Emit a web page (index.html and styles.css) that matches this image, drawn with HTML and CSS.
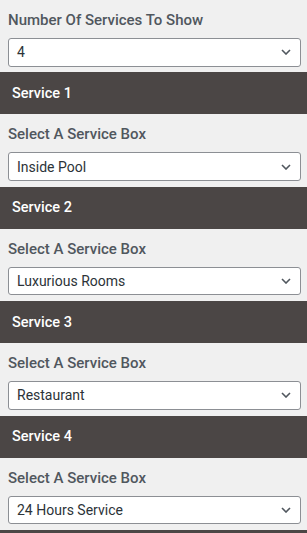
FILE: index.html
```html
<!DOCTYPE html>
<html>
<head>
<meta charset="utf-8">
<link rel="stylesheet" href="styles.css">
</head>
<body>
<div class="panel">
  <div class="field">
    <label class="label">Number Of Services To Show</label>
    <div class="select"><span>4</span><svg class="chev" viewBox="0 0 10 6" width="10" height="6"><path d="M1 1l4 4 4-4" fill="none" stroke="#50575e" stroke-width="1.6"/></svg></div>
  </div>
  <div class="bar">Service 1</div>
  <div class="field">
    <label class="label">Select A Service Box</label>
    <div class="select"><span>Inside Pool</span><svg class="chev" viewBox="0 0 10 6" width="10" height="6"><path d="M1 1l4 4 4-4" fill="none" stroke="#50575e" stroke-width="1.6"/></svg></div>
  </div>
  <div class="bar">Service 2</div>
  <div class="field">
    <label class="label">Select A Service Box</label>
    <div class="select"><span>Luxurious Rooms</span><svg class="chev" viewBox="0 0 10 6" width="10" height="6"><path d="M1 1l4 4 4-4" fill="none" stroke="#50575e" stroke-width="1.6"/></svg></div>
  </div>
  <div class="bar">Service 3</div>
  <div class="field">
    <label class="label">Select A Service Box</label>
    <div class="select"><span>Restaurant</span><svg class="chev" viewBox="0 0 10 6" width="10" height="6"><path d="M1 1l4 4 4-4" fill="none" stroke="#50575e" stroke-width="1.6"/></svg></div>
  </div>
  <div class="bar">Service 4</div>
  <div class="field">
    <label class="label">Select A Service Box</label>
    <div class="select"><span>24 Hours Service</span><svg class="chev" viewBox="0 0 10 6" width="10" height="6"><path d="M1 1l4 4 4-4" fill="none" stroke="#50575e" stroke-width="1.6"/></svg></div>
  </div>
  <div class="bar"></div>
</div>
</body>
</html>
```
FILE: styles.css
```css
html, body {
  margin: 0;
  padding: 0;
  background: #f0f0f0;
}
body {
  font-family: Roboto, "Liberation Sans", sans-serif;
  width: 307px;
  height: 533px;
  overflow: hidden;
}
.panel {
  display: flex;
  flex-direction: column;
}
.field {
  padding: 10px 6px 5.7px 8px;
  display: flex;
  flex-direction: column;
}
.label {
  display: block;
  font-size: 15px;
  line-height: 20px;
  font-weight: 500;
  color: #50575e;
  margin-bottom: 8px;
}
.select {
  box-sizing: border-box;
  height: 28.7px;
  background: #fff;
  border: 1px solid #8c8f94;
  border-radius: 3px;
  display: flex;
  align-items: center;
  justify-content: space-between;
  padding: 0 9px 0 8px;
  font-size: 14px;
  color: #2c3338;
}
.chev {
  display: block;
}
.bar {
  background: #4b4645;
  color: #fff;
  height: 42px;
  box-sizing: border-box;
  padding-left: 12px;
  display: flex;
  align-items: center;
  font-size: 14.5px;
  font-weight: 500;
}
```
